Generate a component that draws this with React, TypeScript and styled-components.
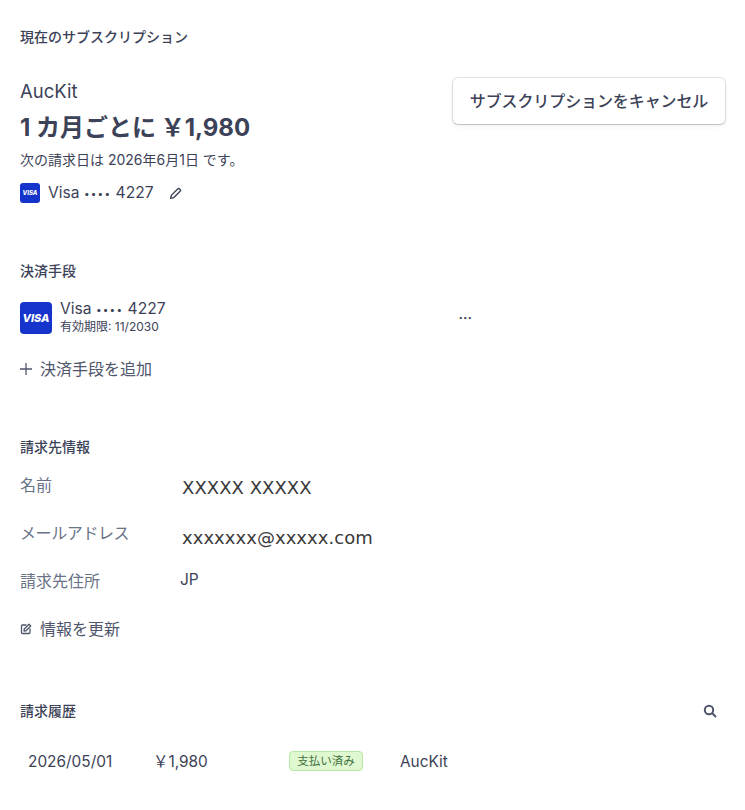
import React from "react";
import styled, { createGlobalStyle } from "styled-components";

const Global = createGlobalStyle`
  html, body { margin: 0; padding: 0; background: #fff; }
  body { font-family: Inter, "Noto Sans CJK JP", sans-serif; color: #3c4257; overflow: hidden; }
`;
const Page = styled.div`
  width: 745px; height: 810px; box-sizing: border-box; padding: 28px 20px 0 20px; overflow: hidden;
`;
const Section = styled.section<{ $gap: number }>`
  margin-bottom: ${p => p.$gap}px;
`;
const Heading = styled.h2`
  margin: 0; font-size: 14px; line-height: 17px; font-weight: 500; color: #3c4257;
`;
const SubRow = styled.div`
  display: flex; justify-content: space-between; align-items: flex-start; margin-top: 33px;
`;
const PlanInfo = styled.div`display: flex; flex-direction: column;`;
const PlanName = styled.div`font-size: 18.5px; line-height: 26px; color: #3c4257;`;
const Price = styled.div`font-size: 24px; line-height: 32px; font-weight: 700; color: #3c4257; margin-top: 8px;`;
const Yen = styled.span`font-family: "Noto Sans CJK JP", sans-serif; line-height: 1; margin-left: -1px;`;
const NextBill = styled.div`font-size: 14px; line-height: 18px; color: #3c4257; margin-top: 7px;`;
const CardLine = styled.div`display: flex; align-items: center; margin-top: 14px; font-size: 15.6px; line-height: 20px; color: #3c4257;`;
const VisaBadge = styled.div<{ $size: "sm" | "lg" }>`
  background: #1434cb; color: #fff; display: flex; align-items: center; justify-content: center;
  font-style: italic; font-weight: 800; flex: none;
  width: ${p => (p.$size === "sm" ? 20 : 32)}px;
  height: ${p => (p.$size === "sm" ? 20 : 32)}px;
  border-radius: ${p => (p.$size === "sm" ? 3 : 4)}px;
  font-size: ${p => (p.$size === "sm" ? 6 : 11)}px;
`;
const CardText = styled.span`margin-left: 8px;`;
const Dots = styled.span`font-size: 10px; line-height: 1; letter-spacing: 1.2px; vertical-align: 1.5px;`;
const EditBtn = styled.span`display: inline-flex; margin-left: 15px; color: #3c4257;`;
const CancelButton = styled.button`
  width: 272px; height: 46px; box-sizing: border-box; background: #fff; border: 0; border-radius: 5px; padding: 0;
  box-shadow: 0 0 0 1px rgba(60,66,87,.14), 0 1px 1px rgba(0,0,0,.12), 0 2px 5px rgba(60,66,87,.08);
  font: 500 16px/20px Inter, "Noto Sans CJK JP", sans-serif; letter-spacing: -0.1px; color: #3c4257;
`;
const PaymentRow = styled.div`display: flex; align-items: center; margin-top: 22px; position: relative; width: 452px;`;
const PaymentText = styled.div`margin: -2px 0 0 8px; flex: 1;`;
const PaymentTitle = styled.div`font-size: 15.6px; line-height: 20px; color: #3c4257;`;
const PaymentExpiry = styled.div`font-size: 12px; line-height: 16px; color: #3c4257;`;
const More = styled.span`font-size: 14px; line-height: 14px; color: #3c4257; font-weight: 600;`;
const ActionLink = styled.div<{ $gap: number; $top: number }>`
  display: flex; align-items: center; gap: ${p => p.$gap}px; margin-top: ${p => p.$top}px;
  font-size: 16px; line-height: 24px; font-weight: 400; color: #4f566b;
`;
const InfoGrid = styled.div`display: flex; flex-direction: column; margin-top: 20px;`;
const InfoRow = styled.div<{ $h: number }>`display: flex; height: ${p => p.$h}px; align-items: flex-start;`;
const InfoLabel = styled.div<{ $track?: number }>`
  width: 160px; flex: none; font-size: 16px; line-height: 20px; color: #697386; letter-spacing: ${p => p.$track ?? 0}px;
`;
const MaskedValue = styled.div<{ $top: number }>`
  font-family: "DejaVu Sans", sans-serif; font-size: 18px; line-height: 24px; letter-spacing: 0.05px; color: #3a3a3a;
  margin: ${p => p.$top}px 0 0 2px;
`;
const PlainValue = styled.div`font-size: 15.5px; line-height: 20px; color: #3c4257; margin-top: -1px;`;
const HistoryHead = styled.div`display: flex; justify-content: space-between; align-items: center; padding-right: 8px;`;
const HistoryRow = styled.div`display: flex; align-items: flex-start; margin-top: 32px; font-size: 15.4px; line-height: 20px; color: #3c4257; padding-left: 8px;`;
const Cell = styled.div<{ $w: number }>`width: ${p => p.$w}px; flex: none; padding-top: 1px;`;
const BadgeCell = styled.div`width: 111px; flex: none;`;
const Badge = styled.span`
  display: block; box-sizing: border-box; height: 20px; width: 74px; text-align: center;
  background: #e0f8d0; border: 1px solid #b5e8a0; border-radius: 4px; font-size: 11.5px; line-height: 18px; color: #3f6f3f;
`;

const Pencil = () => (
  <svg width="13" height="13" viewBox="0 0 24 24" fill="none" stroke="currentColor" strokeWidth="2.6" strokeLinejoin="round">
    <path d="M3 21l1.5-6L16 3.5a2.5 2.5 0 0 1 3.5 0l1 1a2.5 2.5 0 0 1 0 3.5L9 19.5z" />
  </svg>
);
const Plus = () => (
  <svg width="12" height="12" viewBox="0 0 12 12" stroke="currentColor" strokeWidth="1.3"><path d="M6 0v12M0 6h12" /></svg>
);
const EditSquare = () => (
  <svg width="12" height="12" viewBox="0 0 24 24" fill="none" stroke="currentColor" strokeWidth="2.6" strokeLinecap="round" strokeLinejoin="round">
    <path d="M12 4H5a2 2 0 0 0-2 2v13a2 2 0 0 0 2 2h13a2 2 0 0 0 2-2v-7" />
    <path d="M18 2.5l3.5 3.5L12 15.5l-4 .5.5-4z" />
  </svg>
);
const Search = () => (
  <svg width="14" height="14" viewBox="0 0 14 14" fill="none" stroke="#4f566b" strokeWidth="2"><circle cx="6" cy="6" r="4.2" /><path d="M9 9l4 4" /></svg>
);

const YEN = "\uFFE5";

export default function App() {
  return (
    <Page>
      <Global />
      <Section $gap={59}>
        <Heading>現在のサブスクリプション</Heading>
        <SubRow>
          <PlanInfo>
            <PlanName>AucKit</PlanName>
            <Price>1 カ月ごとに <Yen>{YEN}</Yen>1,980</Price>
            <NextBill>次の請求日は 2026年6月1日 です。</NextBill>
            <CardLine>
              <VisaBadge $size="sm">VISA</VisaBadge>
              <CardText>Visa <Dots>••••</Dots> 4227</CardText>
              <EditBtn><Pencil /></EditBtn>
            </CardLine>
          </PlanInfo>
          <CancelButton>サブスクリプションをキャンセル</CancelButton>
        </SubRow>
      </Section>
      <Section $gap={57}>
        <Heading>決済手段</Heading>
        <PaymentRow>
          <VisaBadge $size="lg">VISA</VisaBadge>
          <PaymentText>
            <PaymentTitle>Visa <Dots>••••</Dots> 4227</PaymentTitle>
            <PaymentExpiry>有効期限: 11/2030</PaymentExpiry>
          </PaymentText>
          <More>···</More>
        </PaymentRow>
        <ActionLink $gap={8} $top={22}><Plus />決済手段を追加</ActionLink>
      </Section>
      <Section $gap={61}>
        <Heading>請求先情報</Heading>
        <InfoGrid>
          <InfoRow $h={48}><InfoLabel>名前</InfoLabel><MaskedValue $top={1}>XXXXX XXXXX</MaskedValue></InfoRow>
          <InfoRow $h={48}><InfoLabel $track={-0.4}>メールアドレス</InfoLabel><MaskedValue $top={3}>xxxxxxx@xxxxx.com</MaskedValue></InfoRow>
          <InfoRow $h={46}><InfoLabel>請求先住所</InfoLabel><PlainValue>JP</PlainValue></InfoRow>
        </InfoGrid>
        <ActionLink $gap={8} $top={0}><EditSquare />情報を更新</ActionLink>
      </Section>
      <Section $gap={0}>
        <HistoryHead><Heading>請求履歴</Heading><Search /></HistoryHead>
        <HistoryRow>
          <Cell $w={126}>2026/05/01</Cell>
          <Cell $w={135}><Yen>{YEN}</Yen>1,980</Cell>
          <BadgeCell><Badge>支払い済み</Badge></BadgeCell>
          <Cell $w={100}>AucKit</Cell>
        </HistoryRow>
      </Section>
    </Page>
  );
}
